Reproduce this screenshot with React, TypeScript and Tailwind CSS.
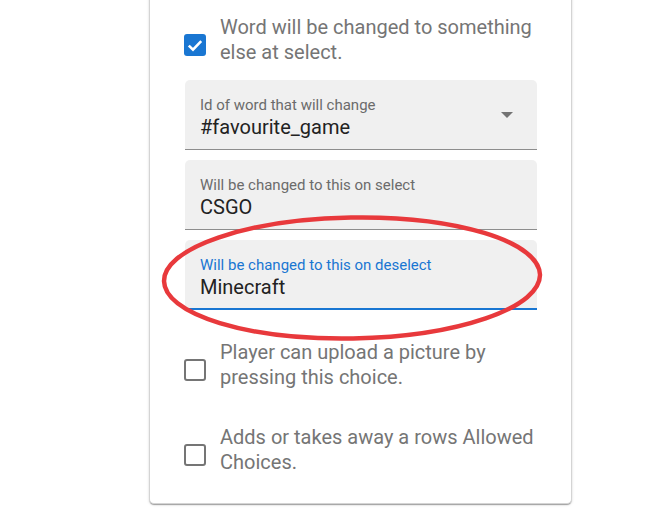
import React from "react";

function CheckBox({ checked }: { checked?: boolean }) {
  if (checked) {
    return (
      <div className="w-[22px] h-[22px] shrink-0 rounded-[3px] bg-[#1976d2] flex items-center justify-center">
        <svg width="16" height="13" viewBox="0 0 16 13">
          <path d="M1.8 6.6 L6 10.6 L14.2 2.2" fill="none" stroke="#fff" strokeWidth="2.6" />
        </svg>
      </div>
    );
  }
  return <div className="w-[22px] h-[22px] shrink-0 rounded-[3px] border-[2.5px] border-[#757575]" />;
}

function CheckRow({ checked, children }: { checked?: boolean; children: React.ReactNode }) {
  return (
    <div className="flex items-start">
      <div className="mt-[19.5px]">
        <CheckBox checked={checked} />
      </div>
      <p className="pl-[14px] whitespace-nowrap text-[20px] leading-[25px] text-[#757575]">{children}</p>
    </div>
  );
}

function Field({
  label,
  value,
  focused,
  select,
}: {
  label: string;
  value: string;
  focused?: boolean;
  select?: boolean;
}) {
  return (
    <div
      className={
        focused
          ? "flex h-[70px] rounded-t-[5px] bg-[#f0f0f0] border-b-2 border-[#1976d2] px-[15px]"
          : "flex h-[70px] rounded-t-[5px] bg-[#f0f0f0] border-b border-[#8d8d8d] px-[15px]"
      }
    >
      <div className="flex-1 pt-[16px]">
        <div className={focused ? "text-[15px] leading-[18px] text-[#1976d2]" : "text-[15px] leading-[18px] text-[#6b6b6b]"}>
          {label}
        </div>
        <div className="mt-[2px] text-[20px] leading-[23px] text-[#222]">{value}</div>
      </div>
      {select && (
        <svg className="self-center mr-[9px] mt-[1px]" width="12" height="6" viewBox="0 0 12 6">
          <polygon points="0,0 12,0 6,6" fill="#737373" />
        </svg>
      )}
    </div>
  );
}

export default function App() {
  return (
    <div
      className="relative w-[663px] h-[531px] overflow-hidden bg-white"
      style={{ fontFamily: "Roboto, 'Noto Sans', sans-serif" }}
    >
      <div className="ml-[149px] -mt-[8px] w-[423px] rounded-b-[5px] border-x border-b border-[#d4d4d4] bg-white pt-[22.5px] pb-[28px] pl-[34px] pr-[34px] shadow-[0_2px_1px_-1px_rgba(0,0,0,0.2),0_1px_1px_0_rgba(0,0,0,0.14),0_1px_3px_0_rgba(0,0,0,0.12)]">
        <CheckRow checked>
          Word will be changed to something
          <br />
          else at select.
        </CheckRow>
        <div className="ml-[1px] w-[352px] mt-[15.5px] flex flex-col gap-[10px]">
          <Field label="Id of word that will change" value="#favourite_game" select />
          <Field label="Will be changed to this on select" value="CSGO" />
          <Field label="Will be changed to this on deselect" value="Minecraft" focused />
        </div>
        <div className="mt-[29.5px]">
          <CheckRow>
            Player can upload a picture by
            <br />
            pressing this choice.
          </CheckRow>
        </div>
        <div className="mt-[35px]">
          <CheckRow>
            Adds or takes away a rows Allowed
            <br />
            Choices.
          </CheckRow>
        </div>
      </div>
      <svg className="absolute left-[157px] top-[210px]" width="390" height="140" viewBox="0 0 390 140">
        <ellipse
          cx="195"
          cy="68"
          rx="188"
          ry="60.5"
          fill="none"
          stroke="#e8393c"
          strokeWidth="4.5"
          transform="rotate(-1 195 68)"
        />
      </svg>
    </div>
  );
}
